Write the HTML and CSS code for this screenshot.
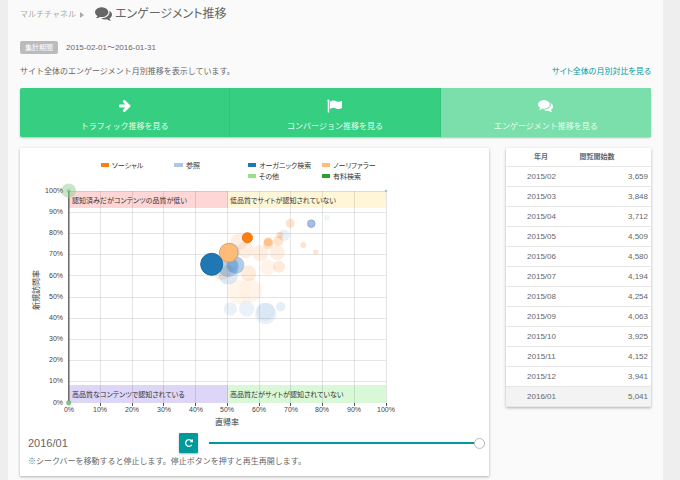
FILE: index.html
```html
<!DOCTYPE html>
<html lang="ja">
<head>
<meta charset="utf-8">
<title>エンゲージメント推移</title>
<link rel="stylesheet" href="styles.css">
</head>
<body>
<svg class="defs" aria-hidden="true">
  <symbol id="comments" viewBox="0 128 1792 1664"><path d="M1408 768q0 139-94 257t-256.500 186.500-353.500 68.500q-86 0-176-16-124 88-278 128-36 9-86 16h-3q-11 0-20.500-8t-11.500-21q-1-3-1-6.500t.5-6.500 2-6l2.500-5 3.500-5.500 4-5 4.500-5 4-4.500q5-6 23-25t26-29.500 22.500-29 25-38.500 20.500-44q-124-72-195-177t-71-224q0-139 94-257t256.500-186.500 353.500-68.500 353.500 68.500 256.500 186.500 94 257zm384 256q0 120-71 224.500t-195 176.500q10 24 20.500 44t25 38.500 22.500 29 26 29.500 23 25q1 1 4 4.500t4.500 5 4 5 3.500 5.500l2.500 5 2 6 .5 6.500-1 6.500q-3 14-13 22t-22 7q-50-7-86-16-154-40-278-128-90 16-176 16-271 0-472-132 58 4 88 4 161 0 309-45t264-129q125-92 192-212t67-254q0-77-23-152 129 71 204 178t75 230z"/></symbol>
</svg>
<main class="page">
  <header class="heading">
    <a class="crumb" href="#">マルチチャネル</a>
    <svg class="caret" viewBox="0 0 4 6" aria-hidden="true"><path d="M0 0l4 3-4 3z"/></svg>
    <h1 class="title"><svg class="title-icon" aria-hidden="true"><use href="#comments"/></svg>エンゲージメント推移</h1>
  </header>
  <div class="period"><span class="badge">集計期間</span><span>2015-02-01～2016-01-31</span></div>
  <div class="intro">
    <p>サイト全体のエンゲージメント月別推移を表示しています。</p>
    <a class="compare" href="#">サイト全体の月別対比を見る</a>
  </div>
  <nav class="tabs">
    <a class="tab" href="#"><svg class="tab-icon" viewBox="64 64 1664 1792" aria-hidden="true"><path d="M1664 960q0 54-37 91l-651 651q-39 37-91 37-51 0-90-37l-75-75q-38-38-38-91t38-91l293-293H309q-52 0-84.500-37.500T192 1024V896q0-53 32.500-90.500T309 768h704L720 474q-38-36-38-90t38-90l75-75q38-38 90-38 53 0 91 38l651 651q37 35 37 90z"/></svg>トラフィック推移を見る</a>
    <a class="tab" href="#"><svg class="tab-icon" viewBox="0 0 16 14" aria-hidden="true"><path d="M1.500 0a1.300 1.300 0 0 1 .8 2.300V14H.8V2.300A1.300 1.300 0 0 1 1.500 0zM3 2.500C6 .8 8 .8 10 1.800s3 1 6-.3v7.700c-3 1.500-4.500 1.300-6.500.4S6 8.500 3 10.300z"/></svg>コンバージョン推移を見る</a>
    <a class="tab tab-current" href="#" aria-current="page"><svg class="tab-icon" aria-hidden="true"><use href="#comments"/></svg>エンゲージメント推移を見る</a>
  </nav>
  <div class="columns">
    <section class="card">
      <svg class="chart" viewBox="20 148 469 281" role="img" aria-label="直帰率と新規訪問率">
        <g class="legend">
          <rect x="101" y="163" width="8" height="4" fill="#ff7f0e"/><text x="112" y="168">ソーシャル</text>
          <rect x="174" y="163" width="9" height="4" fill="#aec7e8"/><text x="186" y="168">参照</text>
          <rect x="248" y="163" width="8" height="4" fill="#1f77b4"/><text x="259" y="168">オーガニック検索</text>
          <rect x="322" y="163" width="8" height="4" fill="#ffbb78"/><text x="333" y="168">ノーリファラー</text>
          <rect x="248" y="174" width="8" height="4" fill="#98df8a"/><text x="259" y="179">その他</text>
          <rect x="322" y="174" width="8" height="4" fill="#2ca02c"/><text x="333" y="179">有料検索</text>
        </g>
        <rect x="69" y="191" width="159" height="17" fill="#ffd6d6"/>
        <rect x="228" y="191" width="158" height="17" fill="#fff6d8"/>
        <rect x="69" y="385" width="159" height="18" fill="#ded6f6"/>
        <rect x="228" y="385" width="158" height="18" fill="#d8f8d8"/>
        <path class="gridlines" d="M100.500 191V403M132.500 191V403M163.500 191V403M195.500 191V403M227.500 191V403M259.500 191V403M290.500 191V403M322.500 191V403M354.500 191V403M386.500 191V403M69 191.500H386M69 212.500H386M69 233.500H386M69 254.500H386M69 275.500H386M69 297.500H386M69 318.500H386M69 339.500H386M69 360.500H386M69 381.500H386"/>
        <path class="ticks" d="M100.500 403v3M132.500 403v3M163.500 403v3M195.500 403v3M227.500 403v3M259.500 403v3M290.500 403v3M322.500 403v3M354.500 403v3M386.500 403v3"/>
        <path class="axis" d="M68.800 191V405"/>
        <g class="zones">
          <text x="72" y="203">認知済みだがコンテンツの品質が低い</text>
          <text x="230" y="203">低品質でサイトが認知されていない</text>
          <text x="72" y="397">高品質なコンテンツで認知されている</text>
          <text x="230" y="397">高品質だがサイトが認知されていない</text>
        </g>
        <g fill="#ffbb78">
          <g opacity=".2">
            <circle cx="239" cy="291.700" r="12" opacity=".7"/><circle cx="250.300" cy="290.300" r="11.700" opacity=".8"/>
          </g>
          <circle cx="222" cy="270" r="10" opacity=".3"/>
          <g fill="#ff9f52" fill-opacity=".17">
            <circle cx="239" cy="241.700" r="8.500"/><circle cx="245.300" cy="250" r="8.300"/><circle cx="260.300" cy="253.300" r="8"/><circle cx="277.300" cy="252.700" r="7.500"/><circle cx="267.700" cy="267.300" r="7.700" fill-opacity=".12"/><circle cx="279" cy="266.700" r="6" fill-opacity=".22"/><circle cx="248.300" cy="273.300" r="8" fill-opacity=".2"/>
          </g>
          <g fill="#ff9740" fill-opacity=".27">
            <circle cx="278.300" cy="241" r="5"/><circle cx="279.700" cy="235.300" r="3.500"/><circle cx="290.300" cy="223.300" r="4.500"/><circle cx="303.300" cy="245" r="3"/><circle cx="315.700" cy="252" r="2.600"/><circle cx="268.300" cy="244" r="5.200"/><circle cx="268.300" cy="242" r="4.500" fill-opacity=".45"/>
          </g>
        </g>
        <g fill="#4f8fca">
          <circle cx="284.300" cy="235.300" r="5.700" opacity=".12"/><circle cx="228.300" cy="275" r="9.700" opacity=".2"/><circle cx="230" cy="252" r="9.500" opacity=".25"/><circle cx="228.300" cy="266.500" r="10.500" opacity=".35"/><circle cx="235.700" cy="265" r="8.700" opacity=".45"/><circle cx="232" cy="266" r="6" opacity=".25"/>
          <circle cx="230.300" cy="309" r="6.700" opacity=".12"/><circle cx="246.700" cy="308.700" r="7.700" opacity=".12"/><circle cx="265.700" cy="313.700" r="10.600" opacity=".12"/><circle cx="265.700" cy="311.700" r="9.300" opacity=".1"/><circle cx="280.700" cy="306.700" r="4.700" opacity=".14"/>
        </g>
        <circle cx="327" cy="217.700" r="3" fill="#eff8f8"/>
        <circle cx="311.300" cy="223.700" r="3.700" fill="#a5c0e6" stroke="#8ba8d4"/>
        <circle cx="228.700" cy="252.700" r="9.300" fill="#ffbb78" stroke="#dca36d"/>
        <circle cx="211.700" cy="264.300" r="11" fill="#1f77b4" stroke="#1a699f"/>
        <circle cx="247.400" cy="237.800" r="5" fill="#ff7f0e" stroke="#e4720d"/>
        <circle cx="68.700" cy="190.700" r="7.200" fill="#8fcf94" opacity=".5"/>
        <circle cx="68.700" cy="191" r="2" fill="#71b579" opacity=".5"/>
        <circle cx="68.700" cy="402.700" r="2.200" fill="#7bcf7a" stroke="#5e9e5e" stroke-width=".5"/>
        <circle cx="386" cy="191" r="1.300" fill="#9bd29b"/>
        <g class="labels y">
          <text x="63" y="193">100%</text><text x="63" y="214">90%</text><text x="63" y="235">80%</text><text x="63" y="256">70%</text><text x="63" y="278">60%</text><text x="63" y="299">50%</text><text x="63" y="320">40%</text><text x="63" y="341">30%</text><text x="63" y="362">20%</text><text x="63" y="383">10%</text><text x="63" y="405">0%</text>
        </g>
        <g class="labels x">
          <text x="69" y="412">0%</text><text x="100" y="412">10%</text><text x="132" y="412">20%</text><text x="164" y="412">30%</text><text x="196" y="412">40%</text><text x="227" y="412">50%</text><text x="259" y="412">60%</text><text x="291" y="412">70%</text><text x="322" y="412">80%</text><text x="354" y="412">90%</text><text x="386" y="412">100%</text>
        </g>
        <text class="axis-title" x="227" y="425">直帰率</text>
        <text class="axis-title" transform="translate(39 290) rotate(-90)">新規訪問率</text>
      </svg>
      <div class="player">
        <label class="month" for="seek">2016/01</label>
        <button class="replay" type="button" aria-label="再生"><svg class="replay-icon" viewBox="128 128 1536 1536" aria-hidden="true"><path d="M1664 256v448q0 26-19 45t-45 19h-448q-42 0-59-40-17-39 14-69l138-138Q1097 384 896 384q-104 0-198.500 40.500T534 534 424.500 697.500 384 896t40.500 198.500T534 1258t163.500 109.500T896 1408q119 0 225-52t179-147q7-10 23-12 15 0 25 9l137 138q9 8 9.500 20.500t-7.500 22.500q-109 132-264 204.500T896 1664q-156 0-298-61t-245-164-164-245-61-298 61-298 164-245 245-164 298-61q147 0 284.500 55.500T1425 329l130-129q29-31 70-14 39 17 39 56z"/></svg></button>
        <input class="seek" id="seek" type="range" min="0" max="11" value="11">
      </div>
      <p class="note">※シークバーを移動すると停止します。停止ボタンを押すと再生再開します。</p>
    </section>
    <table class="months">
      <thead><tr><th>年月</th><th>閲覧開始数</th></tr></thead>
      <tbody>
        <tr><td>2015/02</td><td>3,659</td></tr>
        <tr><td>2015/03</td><td>3,848</td></tr>
        <tr><td>2015/04</td><td>3,712</td></tr>
        <tr><td>2015/05</td><td>4,509</td></tr>
        <tr><td>2015/06</td><td>4,580</td></tr>
        <tr><td>2015/07</td><td>4,194</td></tr>
        <tr><td>2015/08</td><td>4,254</td></tr>
        <tr><td>2015/09</td><td>4,063</td></tr>
        <tr><td>2015/10</td><td>3,925</td></tr>
        <tr><td>2015/11</td><td>4,152</td></tr>
        <tr><td>2015/12</td><td>3,941</td></tr>
        <tr class="selected"><td>2016/01</td><td>5,041</td></tr>
      </tbody>
    </table>
  </div>
</main>
</body>
</html>
```
FILE: styles.css
```css
* { box-sizing: border-box; }
html { background: #eee; }
body {
  margin: 0;
  font: 8px/12px "Liberation Sans", "Noto Sans CJK JP", sans-serif;
  color: #666;
}
p, h1 { margin: 0; }
a { text-decoration: none; }
.title, .compare, .chart { font-feature-settings: "palt"; }
.defs { display: none; }
.page {
  min-height: 100vh;
  margin: 0 17px 0 8px;
  padding: 4px 12px;
  background: #fafafa;
}
.heading { display: flex; align-items: center; height: 20px; }
.crumb { padding-top: 2px; color: #aaa; }
.caret { width: 4px; height: 6px; margin: 2px 11px 0 4px; fill: #aaa; }
.title { display: flex; align-items: center; gap: 3px; font-size: 12px; font-weight: 400; line-height: 20px; color: #666; }
.title-icon { width: 17px; height: 16px; fill: #666; }
.period { display: flex; align-items: center; gap: 8px; margin-top: 17px; }
.badge { padding: 0 5px; border-radius: 2px; background: #bbb; color: #fff; font-size: 7px; line-height: 13px; }
.intro { display: flex; justify-content: space-between; margin-top: 12px; }
.compare { color: #009a9a; }
.tabs {
  display: grid;
  grid-template-columns: repeat(3, 1fr);
  margin-top: 10px;
  border-radius: 2px;
  overflow: hidden;
  background: #36ce80;
  box-shadow: 0 1px 2px rgba(0, 0, 0, .25);
}
.tab {
  display: flex;
  flex-direction: column;
  align-items: center;
  gap: 8px;
  padding: 11px 0 4px;
  border-right: 1px solid #32c579;
  color: #e6fff1;
}
.tab-current { border-right: 0; background: #7bdfac; }
.tab-icon { width: 15px; height: 14px; fill: #fff; }
.columns {
  display: grid;
  grid-template-columns: minmax(0, 1fr) 145px;
  align-items: start;
  gap: 17px;
  margin-top: 11px;
}
.card, .months { background: #fff; border-radius: 1px; box-shadow: 0 1px 3px rgba(0, 0, 0, .3); }
.card { padding-bottom: 8px; }
.chart { display: block; width: 100%; font-size: 7px; }
.legend, .zones { fill: #333; }
.gridlines { stroke: #000; stroke-opacity: .1; fill: none; }
.ticks { stroke: #555; }
.axis { stroke: #666; stroke-width: 1.5; }
.labels { fill: #444; }
.labels.y { text-anchor: end; }
.labels.x { text-anchor: middle; }
.axis-title { text-anchor: middle; font-size: 8px; fill: #333; }
.player { display: flex; align-items: center; padding: 4px 4px 0 8px; }
.month { width: 151px; font-size: 11px; }
.replay {
  display: grid;
  place-items: center;
  width: 19px;
  height: 20px;
  padding: 0;
  border: 0;
  border-radius: 1px;
  background: #009a9a;
  box-shadow: 0 1px 2px rgba(0, 0, 0, .3);
}
.replay-icon { width: 8px; height: 8px; fill: #fff; }
.seek { appearance: none; flex: 1; min-width: 0; height: 12px; margin: 0 0 0 11px; background: linear-gradient(#009a9a, #009a9a) center / 100% 2px no-repeat; }
.seek::-webkit-slider-thumb { appearance: none; width: 11px; height: 11px; border: 1px solid #bbb; border-radius: 50%; background: #fff; }
.note { margin-top: 3px; padding-left: 8px; }
.months { width: 100%; border-collapse: collapse; table-layout: fixed; }
.months th, .months td { height: 20px; padding: 0 3px; border-bottom: 1px solid #e6e6e6; }
.months td { padding-top: 2px; }
.months th { height: 18px; font-size: 7px; line-height: 10px; }
.months th:first-child { width: 70px; }
.months th:last-child { padding-right: 36px; white-space: nowrap; }
.months td:first-child { text-align: center; padding-left: 4px; }
.months td:last-child { text-align: right; }
.selected { background: #f3f3f3; }
```
